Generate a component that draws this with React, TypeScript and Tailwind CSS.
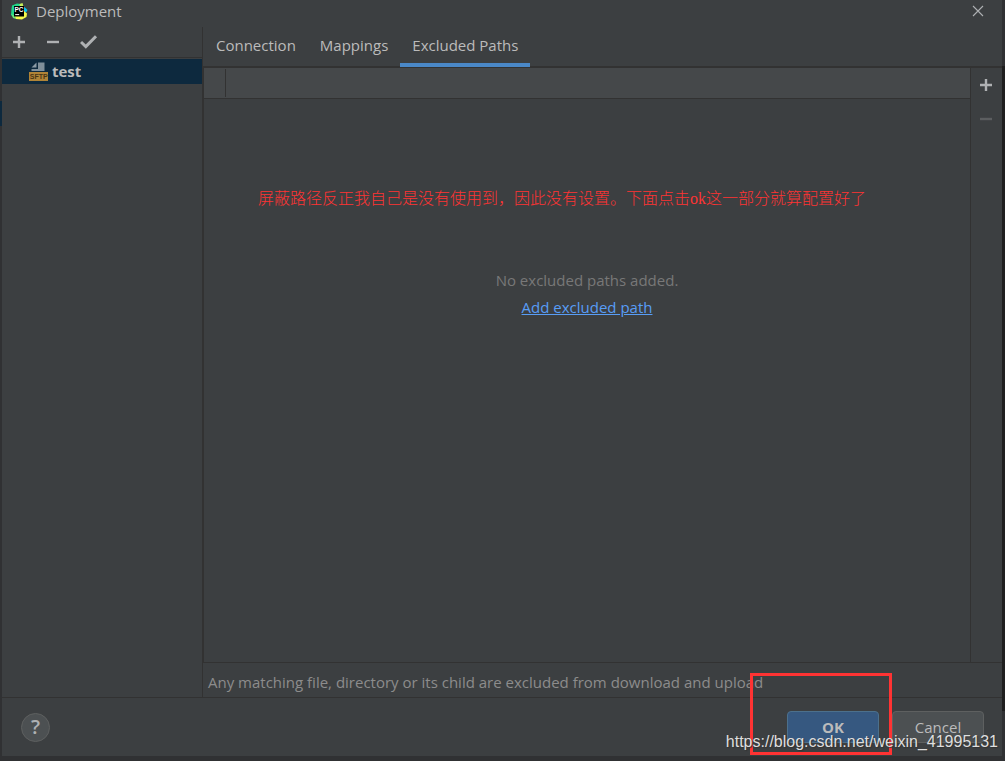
import React from "react";

const ICON = "#afb1b3";

function Plus() {
  return (
    <svg width="14" height="14" viewBox="0 0 14 14" aria-hidden="true">
      <path d="M7 1v12M1 7h12" stroke={ICON} strokeWidth="2.4" />
    </svg>
  );
}

function Minus({ color = ICON }: { color?: string }) {
  return (
    <svg width="14" height="14" viewBox="0 0 14 14" aria-hidden="true">
      <path d="M1 7h12" stroke={color} strokeWidth="2.4" />
    </svg>
  );
}

function Check() {
  return (
    <svg width="18" height="14" viewBox="0 0 18 14" aria-hidden="true">
      <path d="M1 7l4.8 4.6L16 1.2" fill="none" stroke={ICON} strokeWidth="3" />
    </svg>
  );
}

function AppLogo() {
  return (
    <svg width="17" height="17" viewBox="0 0 17 17" aria-hidden="true">
      <path d="M1 2.5L6 0.5L10 1L11 8L3 15L0 12L0.5 6Z" fill="#21d789" />
      <path d="M8.5 1L11.5 0L12.5 3.5L9 5Z" fill="#c8f05a" />
      <path d="M12 3.5L14 4.5L16.5 7L15 9.5L12 9Z" fill="#07c3f2" />
      <path d="M3 13L13 8L16 10.5L15.5 14L11 16.5L5 16Z" fill="#f5f84a" />
      <path d="M0.5 11L4 13L5 16L2 15Z" fill="#6ee87a" />
      <rect x="3" y="3" width="10" height="10.5" fill="#000" />
      <text x="3.4" y="8.8" fontSize="6.5" fontWeight="700" fontFamily="Liberation Sans, sans-serif" fill="#fff">PC</text>
      <path d="M4.2 11.6h4" stroke="#fff" strokeWidth="1" />
    </svg>
  );
}

function SftpIcon() {
  return (
    <svg width="19" height="19" viewBox="0 0 19 19" aria-hidden="true">
      <path d="M7.5 0.5L2.5 5.5H7.5Z" fill="#8a9aa5" />
      <path d="M9 0.5H15.5V9H2.5V7H9Z" fill="#7f8f9a" />
      <rect x="0" y="10" width="19" height="9" fill="#b08437" />
      <text x="0.8" y="17.2" fontSize="7" fontWeight="700" fontFamily="Liberation Sans, sans-serif" fill="#4a3615">SFTP</text>
    </svg>
  );
}

function Sidebar() {
  return (
    <aside className="flex w-[201px] shrink-0 flex-col border-r border-[#323232]">
      <div className="flex h-[31px] shrink-0 items-center gap-5 border-b border-[#323232] pl-[10px]">
        <button type="button" aria-label="Add server"><Plus /></button>
        <button type="button" aria-label="Remove server"><Minus /></button>
        <button type="button" aria-label="Use as default"><Check /></button>
      </div>
      <ul className="pt-px">
        <li className="flex h-[25px] items-center gap-1 bg-[#0d293e] pl-[27px] font-bold">
          <SftpIcon />
          <span>test</span>
        </li>
      </ul>
    </aside>
  );
}

function Tabs() {
  return (
    <div role="tablist" className="flex h-[41px] shrink-0 border-b-2 border-[#323232] pl-px">
      <button type="button" role="tab" aria-selected="false" className="px-3 pb-[3px]">Connection</button>
      <button type="button" role="tab" aria-selected="false" className="px-3 pb-[3px]">Mappings</button>
      <button type="button" role="tab" aria-selected="true" className="-mb-px border-b-4 border-[#4a88c7] px-3">Excluded Paths</button>
    </div>
  );
}

function ExcludedPaths() {
  return (
    <div className="flex min-h-0 grow border-b border-l border-[#323232]">
      <div className="flex grow flex-col border-r border-[#323232]">
        <div className="flex h-[31px] shrink-0 border-b border-[#323232] bg-[#45484a] py-px">
          <div className="w-[22px] border-r border-[#323232]" />
        </div>
        <p className="pt-[87px] pl-[54px] font-['Liberation_Serif','Noto_Sans_CJK_SC',serif] text-[16px] leading-[26px] font-light whitespace-nowrap text-[#ff3333]">
          屏蔽路径反正我自己是没有使用到，因此没有设置。下面点击ok这一部分就算配置好了
        </p>
        <div className="flex flex-col items-center pt-[55px] leading-[27px] text-[#787878]">
          <p>No excluded paths added.</p>
          <a href="#add" className="text-[#589df6] underline">Add excluded path</a>
        </div>
      </div>
      <div className="flex w-[31px] shrink-0 flex-col items-center gap-5 pt-[10px] pr-px">
        <button type="button" aria-label="Add path"><Plus /></button>
        <button type="button" aria-label="Remove path" disabled><Minus color="#5c5e60" /></button>
      </div>
    </div>
  );
}

function Footer() {
  return (
    <footer className="relative flex h-[59px] shrink-0 items-center border-t border-[#323232] pr-[18px] pl-[19px]">
      <button type="button" aria-label="Help" className="size-[29px] rounded-full border border-[#5e6060] bg-[#4c5052] text-[20px] leading-none font-semibold text-[#afb1b3]">?</button>
      <div className="ml-auto flex gap-[13px]">
        <button type="button" className="h-8 w-[92px] rounded-[4px] border border-[#4c708c] bg-[#365880] font-bold">OK</button>
        <button type="button" className="h-8 w-[92px] rounded-[4px] border border-[#5e6060] bg-[#4c5052]">Cancel</button>
      </div>
      <div className="absolute right-[110px] bottom-px h-[82px] w-[142px] border-3 border-[#ff3333]" />
      <span className="absolute right-[4px] bottom-[2px] font-['Liberation_Sans',sans-serif] text-[16px] leading-6 text-[#dedede] [text-shadow:1px_1px_1px_#333]">
        https://blog.csdn.net/weixin_41995131
      </span>
    </footer>
  );
}

export default function App() {
  return (
    <div className="flex h-screen bg-[#303133] font-['Open_Sans','Noto_Sans',sans-serif] text-[15px] text-[#bbbbbb]">
      <div className="w-[2px] shrink-0 pt-[101px]">
        <div className="h-[25px] bg-[#0d293e]" />
      </div>
      <main className="mb-[5px] flex min-w-0 grow flex-col bg-[#3c3f41]">
        <header className="flex h-[27px] shrink-0 items-center pr-[18px] pb-[5px] pl-[9px]">
          <AppLogo />
          <h1 className="ml-2">Deployment</h1>
          <button type="button" aria-label="Close" className="ml-auto">
            <svg width="12" height="12" viewBox="0 0 12 12" aria-hidden="true">
              <path d="M1 1l10 10M11 1L1 11" stroke="#afb1b3" strokeWidth="1.1" />
            </svg>
          </button>
        </header>
        <div className="flex min-h-0 grow">
          <Sidebar />
          <section className="flex min-w-0 grow flex-col">
            <Tabs />
            <ExcludedPaths />
            <p className="flex h-[34px] shrink-0 items-center pt-1 pl-[5px] text-[#8c8c8c]">
              Any matching file, directory or its child are excluded from download and upload
            </p>
          </section>
        </div>
        <Footer />
      </main>
      <div className="w-[3px] shrink-0 pt-[66px] pb-[50px]">
        <div className="h-full bg-[#1f1f1f]" />
      </div>
    </div>
  );
}
